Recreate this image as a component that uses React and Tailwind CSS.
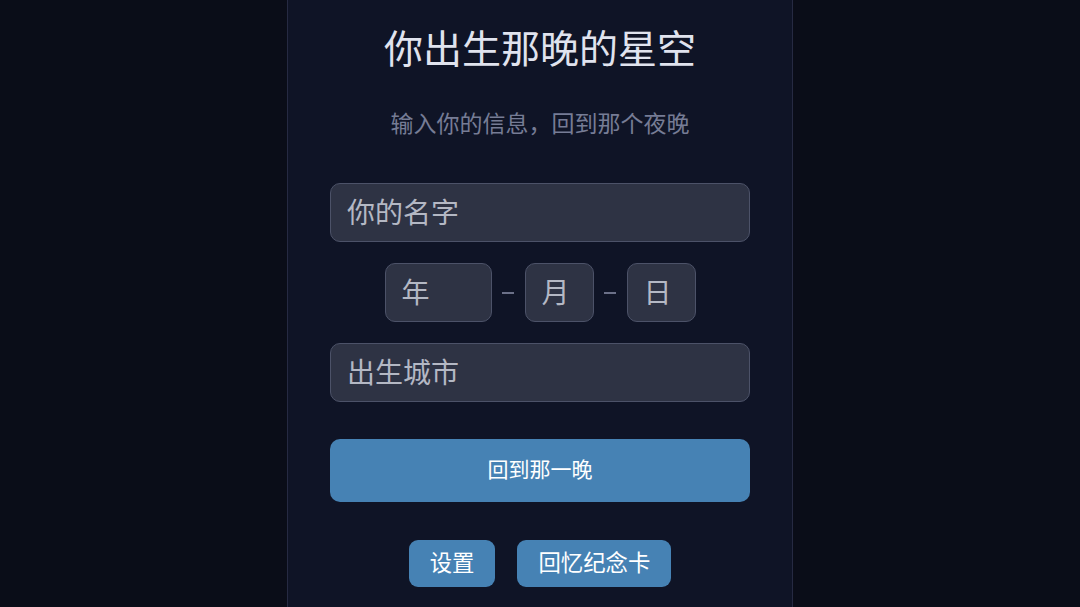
import React from "react";

const font = { fontFamily: '"Noto Sans CJK SC", "Noto Sans", sans-serif' };

function Field({ placeholder, className = "" }) {
  return (
    <input
      placeholder={placeholder}
      className={
        "h-[59px] rounded-[10px] border border-[#4c5268] bg-[#2e3344] pb-[4px] pl-4 text-[28px] text-[#d6d9e2] outline-none placeholder:text-[#b4b8c4] " +
        className
      }
      style={font}
    />
  );
}

export default function App() {
  return (
    <div className="flex h-[607px] w-full justify-center overflow-hidden bg-[#0a0d18]" style={font}>
      <div className="flex h-full w-[506px] flex-col items-center border-x border-[#262a42] bg-[#0f1426] px-[42px] pt-[22px]">
        <h1 className="text-[39px] leading-[48px] font-normal text-[#e0e3ee]">你出生那晚的星空</h1>
        <p className="mt-[37px] text-[23px] leading-[30px] text-[#767c95]">输入你的信息，回到那个夜晚</p>

        <div className="mt-[46px] flex w-full flex-col gap-[21px]">
          <Field placeholder="你的名字" className="w-full" />
          <div className="flex items-center justify-center gap-[10.5px]">
            <Field placeholder="年" className="w-[107px]" />
            <span className="block h-[2px] w-[12px] bg-[#6b7088]" />
            <Field placeholder="月" className="w-[69px]" />
            <span className="block h-[2px] w-[12px] bg-[#6b7088]" />
            <Field placeholder="日" className="w-[69px]" />
          </div>
          <Field placeholder="出生城市" className="w-full" />
        </div>

        <button className="mt-[37px] flex h-[63px] w-full items-center justify-center rounded-[10px] bg-[#4682b4] pb-[4px] text-[21px] text-white">
          回到那一晚
        </button>

        <div className="mt-[38px] flex gap-[22px]">
          <button className="h-[47px] rounded-[9px] bg-[#4682b4] px-[21px] pb-[4px] text-[22.4px] text-white">设置</button>
          <button className="h-[47px] rounded-[9px] bg-[#4682b4] px-[21px] pb-[4px] text-[22.4px] text-white">回忆纪念卡</button>
        </div>
      </div>
    </div>
  );
}
